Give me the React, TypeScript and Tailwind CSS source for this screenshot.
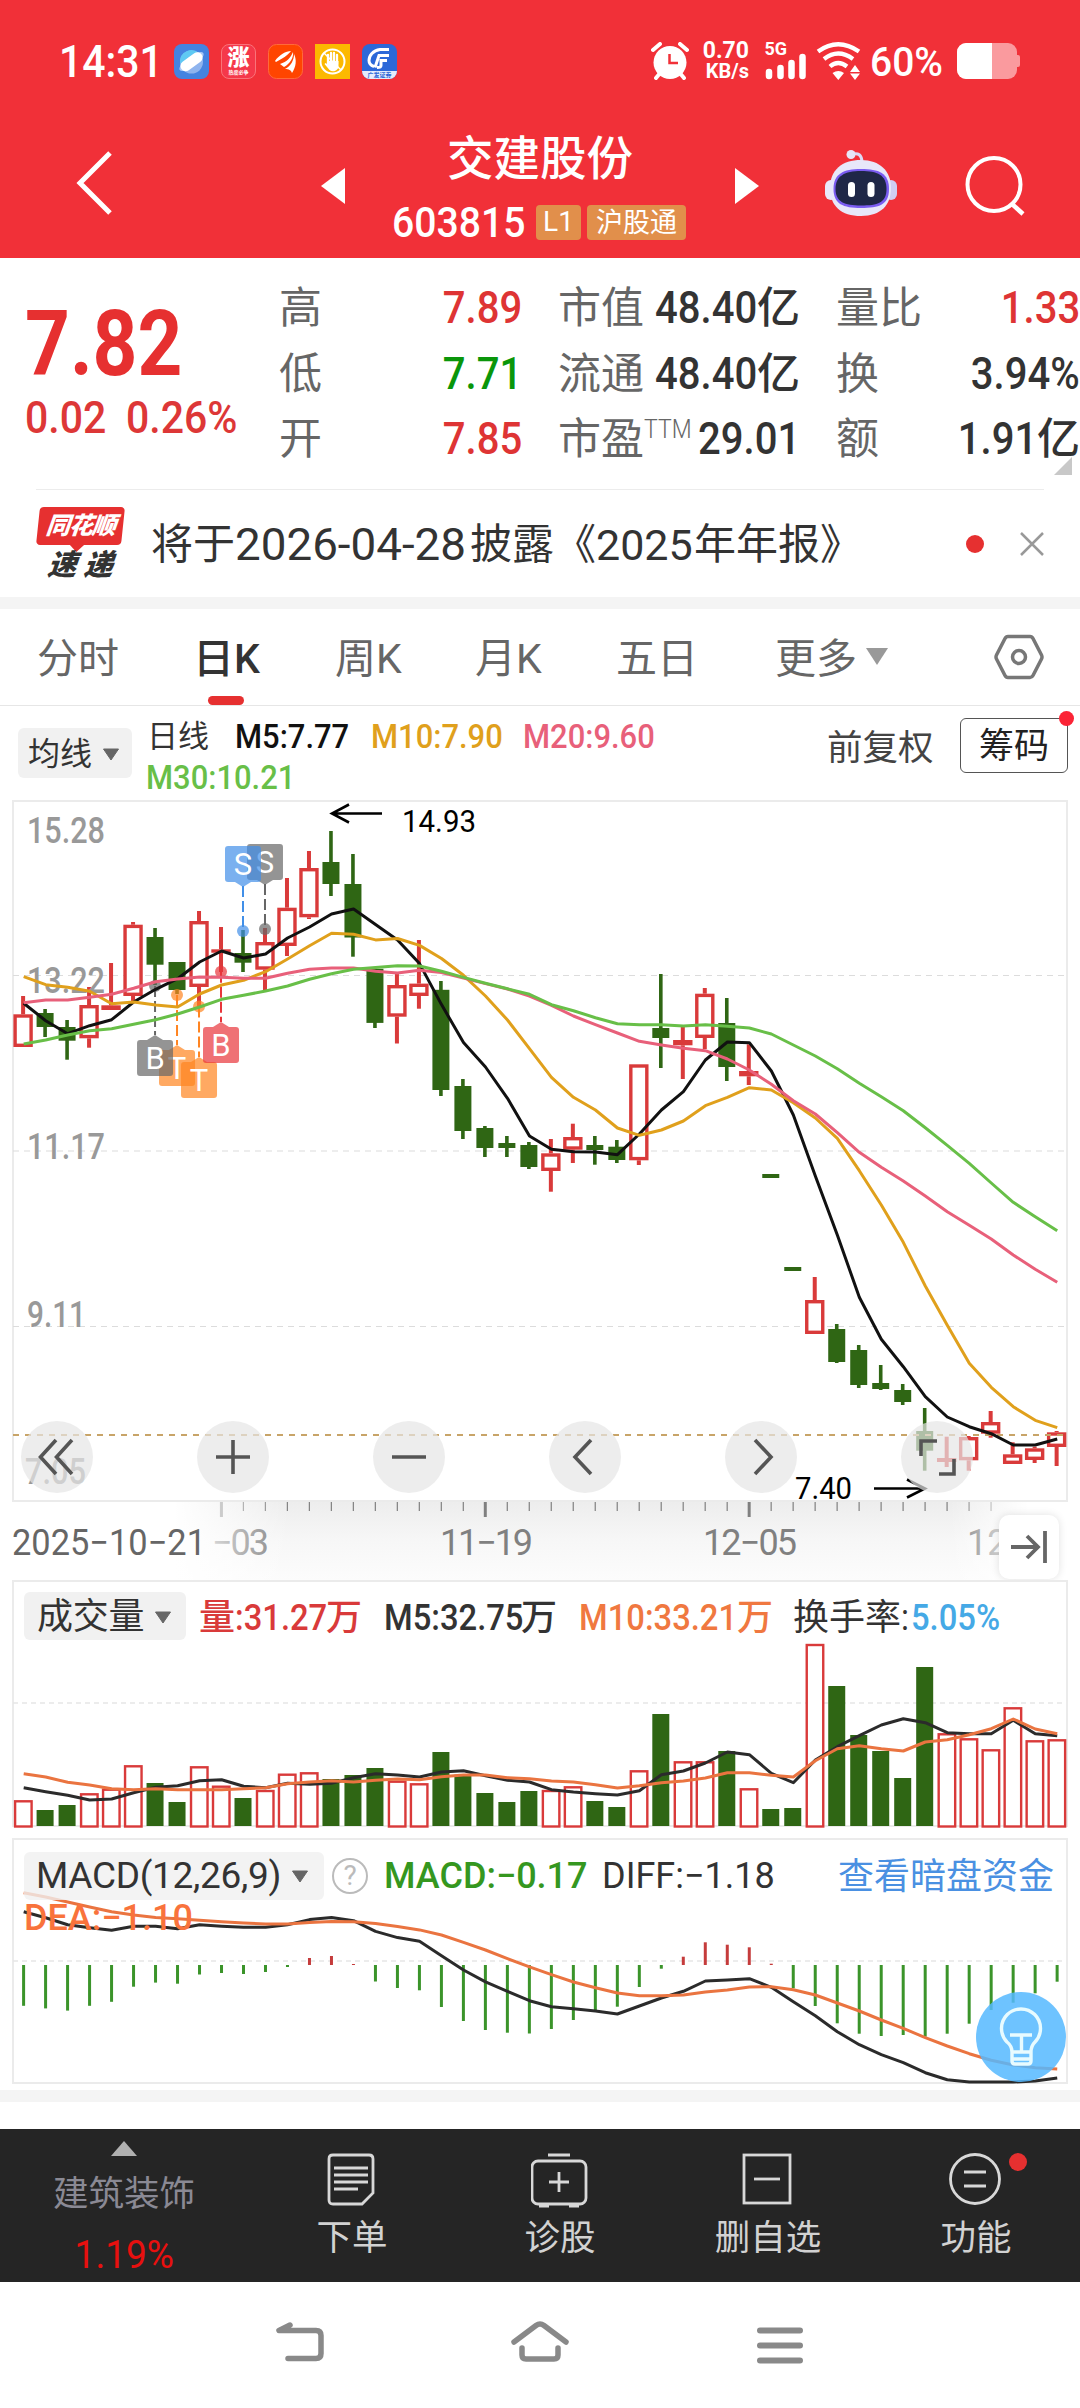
import React from 'react';
import clsx from 'clsx';

type Candle = [up: 0 | 1, high: number, top: number, bottom: number, low: number];

// Bars sit on a 22px grid, y values are plot pixels from the top of each panel
const STEP = 21.99;
const X0 = 23.1;
const cx = (i: number) => X0 + i * STEP;

const RED = '#d93a3a';
const GREEN = '#2f6614';

const candles: Candle[] = [
  [1, 196, 214.3, 247, 247],
  [0, 209, 213, 227, 237],
  [0, 220, 227, 240.7, 259.7],
  [1, 187, 205, 238.3, 247.7],
  [1, 163, 205.3, 210, 210],
  [1, 122, 124.7, 196, 201.7],
  [0, 128, 137, 164.7, 185],
  [0, 162, 162, 190, 194],
  [1, 111, 121, 187, 206],
  [1, 127, 149.3, 152.7, 172],
  [0, 130, 153, 162.7, 172],
  [1, 128, 142, 169.7, 190],
  [1, 78, 107.7, 146, 156],
  [1, 51, 68, 117.3, 119],
  [0, 31, 62, 84, 96],
  [0, 54, 84, 137.5, 156.7],
  [0, 168.8, 168.8, 222.9, 228],
  [1, 174, 185, 216.7, 243.5],
  [1, 140, 183.6, 196, 208.7],
  [0, 181, 189.8, 290, 296],
  [0, 279, 286, 331, 339],
  [0, 326, 328, 348, 357],
  [0, 336, 343, 348, 357],
  [0, 342, 345, 367, 369],
  [1, 339, 353.3, 371, 391.7],
  [1, 323.7, 337, 349.7, 363],
  [0, 336, 345, 350, 364.7],
  [0, 340, 346.7, 360, 363],
  [1, 264.3, 264.3, 360.3, 365],
  [0, 174, 228, 238, 268],
  [1, 226.7, 240, 245.3, 279],
  [1, 188, 193.7, 238, 249],
  [0, 198, 223, 267, 281],
  [1, 244.3, 271, 276.3, 285],
  [0, 374, 374, 378, 378],
  [0, 467, 467, 471, 471],
  [1, 477, 500, 534, 534],
  [0, 524, 529, 562, 563],
  [0, 545, 550, 585, 588],
  [0, 565, 583, 589, 590],
  [0, 584, 590, 602, 605],
  [0, 608, 631, 650.7, 670.7],
  [1, 636.7, 658, 662, 667],
  [1, 636, 637, 660.3, 670.7],
  [1, 611, 622, 633.7, 637.7],
  [1, 642.3, 654.3, 664, 664],
  [1, 646.7, 648.3, 660, 663],
  [1, 631, 632.3, 647, 666],
];

const ma5 = [203.3, 220.7, 233.7, 225.7, 219.7, 202, 189.3, 178.7, 162, 151, 158, 154, 138, 127, 114, 109, 124.4, 139.9, 163.6, 204.6, 242.5, 267, 298.3, 336, 349.3, 351.7, 352, 354.7, 334, 310, 291.7, 260, 242, 242.7, 271, 315, 376, 435, 497.3, 539.3, 566.7, 596.7, 617, 626.7, 633.7, 645, 645, 639];
const ma10 = [176.7, 184.7, 187.3, 191.3, 203.7, 202, 205, 207, 194, 185, 180.3, 171.7, 159, 145.7, 133.3, 134.3, 139.9, 138.5, 145.4, 158.5, 175.3, 196, 220, 248.7, 277.3, 297.3, 310, 328, 335.3, 330, 321, 305.7, 297.3, 287.7, 290, 302.7, 318, 338.3, 370.7, 405, 442.3, 486, 525.3, 563.3, 587.3, 606.7, 620.3, 627.7];
const ma20 = [202.7, 200, 200, 197.3, 194.3, 188.3, 181.7, 179, 177, 177.3, 178.3, 178.3, 173.3, 169.3, 168, 168, 171.2, 172.9, 170.2, 172.6, 178.1, 183.6, 189, 196, 205.3, 216, 224.7, 233, 241.3, 245, 248.3, 250.7, 259, 270, 284.3, 300.7, 314, 332.7, 352.3, 367.3, 381, 396, 411.7, 425.3, 439, 455, 469.3, 482.3];
const ma30 = [244, 240, 235, 230.7, 228.7, 224.3, 219.7, 214, 207, 199.3, 195.3, 191, 186, 179.3, 173.7, 169.3, 167.4, 165.7, 166, 171.2, 177.4, 183.3, 188.8, 194.3, 204.7, 210.7, 217.7, 223.7, 224.7, 224.7, 226, 224.7, 226.3, 228, 234, 245, 256, 268.7, 283.3, 296.7, 310.7, 327.7, 345.3, 363.3, 383, 402.3, 416.7, 430.7];

const volTop = [220.3, 230, 225, 213.3, 208.7, 185.3, 203, 222, 186.3, 205.7, 218, 210, 193.7, 192.3, 199, 195, 188, 200.7, 203.3, 172, 194.7, 213, 222, 211, 210, 206.3, 221, 227, 190.3, 134, 181.3, 181.3, 171, 208.3, 229, 228, 64, 106, 155, 171, 198, 87, 153.3, 158.3, 169.3, 127.3, 160.3, 159.3];
const volMa5 = [207.7, 211.7, 215.3, 220, 219, 212.7, 207.3, 205.7, 200.7, 199.7, 206.3, 207.7, 203.3, 204.3, 203.3, 197.7, 193.7, 195, 197, 192, 190.7, 195.7, 200.3, 202, 209.7, 212, 213.7, 215, 210.7, 194.7, 191, 183, 172, 174.7, 193.3, 202.7, 180, 166.7, 155.7, 145, 138.7, 142.7, 152.7, 153.7, 153.7, 140.3, 153.7, 155.7];
const volMa10 = [193.7, 197, 202.3, 205, 208.7, 209.7, 208.7, 209.7, 209.7, 209.7, 208.7, 207.7, 203.7, 202, 200.7, 202, 200.3, 199, 199.7, 196.7, 195, 195, 197.7, 198.7, 201, 202, 204.7, 208, 205.7, 202.7, 201, 198, 192.7, 192.7, 195.3, 197, 180.7, 168.7, 165.7, 168.7, 171, 162, 159.7, 154.7, 148.7, 139, 149, 153.7];

const macdEnd = [165.8, 168.4, 170.6, 165.8, 161.8, 146.7, 142.6, 143.7, 134.5, 133, 134, 132, 127, 118, 116, 124, 141.5, 148, 150.3, 167, 181, 190, 192.7, 193.5, 189, 180, 172, 166.7, 147, 128.7, 116.7, 102.3, 104.7, 107.3, 123.7, 148.3, 166, 183.3, 193.7, 196, 195, 196.7, 193.7, 183.7, 170, 162.7, 153.3, 141.7];
const diff = [71.8, 77.7, 84.7, 87.7, 90.3, 86.2, 86.2, 88.8, 84.7, 86.2, 87.3, 87.3, 84.7, 79.6, 77.4, 80.7, 91.4, 97.6, 101.3, 115.7, 130, 141.9, 151.4, 160.7, 166.7, 168.7, 171, 174, 166, 158, 151.3, 141, 140, 138.7, 147.3, 161.7, 175.7, 191.7, 204.7, 214.7, 222.7, 232.7, 239.7, 242, 242, 242, 241, 238];
const dea = [52.7, 57, 62, 67, 71.8, 75.1, 77.4, 78.8, 80.3, 81.8, 82.9, 84, 84, 82.5, 81.4, 81.8, 83.6, 86.6, 89.9, 95, 102.4, 110, 118.6, 126.8, 134.7, 142, 147.7, 153, 155.7, 155.7, 155, 152, 150, 147, 146.7, 149.7, 155, 163, 171, 180, 188.3, 197.7, 206, 213.7, 220.3, 225, 227.7, 229];

const Line = ({ data, color }: { data: number[]; color: string }) => (
  <polyline
    points={data.map((y, i) => `${cx(i) + 0.6},${y}`).join(' ')}
    fill="none"
    stroke={color}
    strokeWidth="3"
    strokeLinejoin="round"
  />
);

// Slightly condensed numerals; the width is set by the caller
const Num = ({ children, className, right }: { children: React.ReactNode; className?: string; right?: boolean }) => (
  <span className={clsx('flex shrink-0', right && 'justify-end', className)}>
    <span className={clsx('shrink-0 whitespace-nowrap scale-x-[0.91]', right ? 'origin-right' : 'origin-left')}>
      {children}
    </span>
  </span>
);

const Caret = ({ className }: { className?: string }) => (
  <svg viewBox="0 0 18 13" className={clsx('shrink-0', className)}>
    <path d="M1.5 1h15L9 12z" fill="#666" stroke="#666" strokeLinejoin="round" />
  </svg>
);

const StatusBar = () => (
  <div className="h-[122px] flex items-center pl-[59px] pr-[60px] text-white">
    <span className="mt-px w-[115px] text-[44px] font-medium leading-none">
      <span className="inline-block origin-left scale-x-[0.93]">14:31</span>
    </span>
    <div className="flex gap-[12px]">
      <svg viewBox="0 0 35 35" className="size-[35px]">
        <rect width="35" height="35" rx="8" fill="#4583e0" />
        <circle cx="17.500" cy="18" r="11.500" fill="#8fb4ee" />
        <path d="M6 18a11.500 11.500 0 0 1 19-9L8 22z" fill="#5fc9f3" />
        <ellipse cx="17.500" cy="17.500" rx="14.500" ry="5" fill="#a9c8f5" transform="rotate(-36 17.500 17.500)" />
        <rect x="5" y="12.500" width="25" height="10.500" rx="5.250" fill="#fff" transform="rotate(-36 17.500 17.700)" />
      </svg>
      <div className="size-[35px] rounded-[8px] border border-[#f9737a] bg-[#f5384a] flex flex-col items-center justify-center">
        <span className="text-[22px] leading-[22px] font-black">涨</span>
        <span className="text-[5px] leading-[6px] font-bold">热度必争</span>
      </div>
      <svg viewBox="0 0 35 35" className="size-[35px]">
        <rect x="0.500" y="0.500" width="34" height="34" rx="8" fill="#ff4500" stroke="#ff6a3a" />
        <path d="M7 17c4-6 11-10 16-10-3 4-9 8-15 11zM12 20c7-2 11-7 13-12 1 5-3 12-9 15zM17 25c6-3 9-9 9-15 3 6 2 13-2 19-1-3-3-4-7-4z" fill="#fff" />
      </svg>
      <svg viewBox="0 0 35 35" className="size-[35px]">
        <rect width="35" height="35" fill="#fcb900" />
        <circle cx="17.500" cy="17.500" r="12" fill="none" stroke="#fff" strokeWidth="2" />
        <path d="M13 11v9M16 9v10M19 9v10M22 11v9" stroke="#fff" strokeWidth="2.300" strokeLinecap="round" />
        <path d="M12 17h11.500v5a5.500 5 0 0 1-9 4l-5-6 1-1 3 2z" fill="#fff" />
        <path d="M9 9l17 17" stroke="#fff" strokeWidth="1.500" />
      </svg>
      <div className="size-[35px] rounded-[8px] overflow-hidden bg-[#2c68d8] flex flex-col">
        <svg viewBox="0 0 35 26" className="h-[27px] w-[35px]">
          <path d="M27 5h-9c-7 1-11 6-11 11 0 3 2 5 5 6M27 11H17l-4 12M25 16h-6v5q0 2-4 2" fill="none" stroke="#fff" strokeWidth="3" />
        </svg>
        <span className="h-[8px] bg-[#e4ecfb] text-center text-[6px] leading-[8px] font-bold text-[#2c68d8]">广发证券</span>
      </div>
    </div>

    <div className="ml-auto flex items-center">
      <svg viewBox="0 0 38 38" className="w-[38px] h-[38px]">
        <circle cx="19" cy="20.500" r="16.500" fill="#fff" />
        <path d="M2 8l7-6M36 8l-7-6M5 36l5-6M33 36l-5-6" stroke="#fff" strokeWidth="4" strokeLinecap="round" />
        <path d="M18.500 12v9h8.500" stroke="#f13038" strokeWidth="2.500" fill="none" />
      </svg>
      <div className="ml-[12px] w-[48px] text-[23px] font-bold leading-[20px] text-right">
        <div>0.70</div>
        <div className="text-[20px]">KB/s</div>
      </div>
      <svg viewBox="0 -4 44 42" className="ml-[15px] mb-[4px] w-[44px] h-[42px]">
        <text x="0.500" y="13" fill="#fff" fontSize="18" fontWeight="700">5G</text>
        <path d="M5 30v4M16.500 26v8M27.500 21v13M38.500 15v19" stroke="#fff" strokeWidth="6.500" strokeLinecap="round" />
      </svg>
      <svg viewBox="0 0 46 38" className="ml-[8px] w-[46px] h-[38px]">
        <path d="M2 9.500Q22 -5 43 9.500M8 17Q22 6 37 17M14 24.500Q22 17.500 31 24.500" fill="none" stroke="#fff" strokeWidth="4.300" />
        <path d="M16.500 31q6-4 11.500 0l-5.700 7zM34 30l5-7 5 7zM34 31.500h10l-5 6.500z" fill="#fff" />
      </svg>
      <span className="ml-[8px] mt-[2px] w-[87px] text-[41px] font-medium leading-none">
        <span className="inline-block origin-left scale-x-[0.95]">60%</span>
      </span>
      <div className="flex items-center">
        <div className="flex h-[36px] w-[60px] overflow-hidden rounded-[9px] bg-[#fa9a9e]">
          <div className="w-[35px] bg-white" />
        </div>
        <div className="h-[12px] w-[3px] rounded-r-[2px] bg-[#fa9a9e]" />
      </div>
    </div>
  </div>
);

const Robot = () => (
  <svg viewBox="0 0 72 67" className="w-[72px] h-[67px]">
    <path d="M28 4q8-2 9 7" fill="none" stroke="#dcdaf5" strokeWidth="3" />
    <circle cx="26" cy="4.500" r="4.500" fill="#e7e6f8" />
    <rect y="30" width="12" height="20" rx="6" fill="#e9e8fa" />
    <rect x="60" y="30" width="12" height="20" rx="6" fill="#d0cdf3" />
    <path d="M36 10C55 10 66 21 66 38S56 66 36 66 5 56 5 38 17 10 36 10z" fill="#e8e7f9" />
    <path d="M36 19c18 0 28 4 28 20s-10 19-28 19S8.500 54 8.500 39 18 19 36 19z" fill="#7a5cf0" />
    <path d="M36 21c16.500 0 25.500 4 25.500 18S52.500 55.500 36 55.500 10.500 52 10.500 39 19.500 21 36 21z" fill="#1f2747" />
    <rect x="23" y="32" width="7" height="15" rx="3.500" fill="#fff" />
    <rect x="42.500" y="32" width="7" height="15" rx="3.500" fill="#fff" />
  </svg>
);

const TitleBar = () => (
  <div className="h-[136px] flex text-white">
    <svg viewBox="0 0 36 66" className="ml-[76px] mt-[28px] w-[36px] h-[66px]">
      <path d="M34 3L4 33l30 30" fill="none" stroke="#fff" strokeWidth="5" />
    </svg>
    <svg viewBox="0 0 24 36" className="ml-[209px] mt-[46px] w-[24px] h-[36px]">
      <path d="M24 0v36L0 18z" fill="#fff" />
    </svg>
    <div className="w-[390px] flex flex-col items-center">
      <div className="mt-[13px] text-[46.500px] leading-[48px] font-medium">交建股份</div>
      <div className="mt-[16px] -ml-[2px] flex items-center h-[46px] leading-none">
        <Num className="w-[144px] text-[43px] font-medium">603815</Num>
        <span className="w-[45px] h-[35px] rounded-[4px] bg-[#e18f4b] text-[28px] leading-[34px] text-center">L1</span>
        <span className="ml-[6px] w-[99px] h-[35px] rounded-[4px] bg-[#e18f4b] text-[27px] leading-[36px] text-center">沪股通</span>
      </div>
    </div>
    <svg viewBox="0 0 24 36" className="mt-[46px] w-[24px] h-[36px]">
      <path d="M0 0v36l24-18z" fill="#fff" />
    </svg>
    <div className="ml-[66px] mt-[28px]"><Robot /></div>
    <svg viewBox="0 0 60 61" className="ml-[68px] mt-[33px] w-[60px] h-[61px]">
      <circle cx="29" cy="29.500" r="26.500" fill="none" stroke="#fff" strokeWidth="4" />
      <path d="M47 49l11 10" stroke="#fff" strokeWidth="4.500" />
    </svg>
  </div>
);

const quoteRows = [
  { a: '高', av: '7.89', ac: 'text-[#de3434]', b: '市值', bv: '48.40', unit: '亿', c: '量比', cv: '1.33', cc: 'text-[#de3434]', cu: '' },
  { a: '低', av: '7.71', ac: 'text-[#0a960a]', b: '流通', bv: '48.40', unit: '亿', c: '换', cv: '3.94%', cc: '', cu: '' },
  { a: '开', av: '7.85', ac: 'text-[#de3434]', b: '市盈', bv: '29.01', unit: '', c: '额', cv: '1.91', cc: '', cu: '亿' },
];

const Quote = () => (
  <div className="relative h-[231px] flex">
    <div className="w-[279px] pl-[25px] pt-[41px] text-[#e63030] font-medium">
      <div className="text-[91px] leading-[90px] font-bold">
        <span className="inline-block origin-left scale-x-[0.86]">7.82</span>
      </div>
      <div className="mt-[5px] flex text-[45px] leading-[48px] text-[#dd3737]">
        <Num className="w-[101px]">0.02</Num>
        <Num>0.26%</Num>
      </div>
    </div>
    <div className="flex-1 pt-[18px] text-[43px] leading-[65.500px]">
      {quoteRows.map((r) => (
        <div key={r.a} className="flex h-[65.500px] text-[#333]">
          <span className="w-[100px] text-[#666]">{r.a}</span>
          <Num right className={clsx('w-[143px] text-[44px] font-medium', r.ac)}>{r.av}</Num>
          <span className="ml-[36px] flex w-[242px] justify-between font-medium">
            <span className="flex text-[#666] font-normal">
              {r.b}
              {!r.unit && (
                <span className="w-[44px] -mt-[10px] text-[25px] font-light">
                  <span className="inline-block origin-left scale-x-[0.92]">TTM</span>
                </span>
              )}
            </span>
            <span className="flex">
              <Num right className="text-[44px] w-[90px]">{r.bv}</Num>
              {r.unit && <span>{r.unit}</span>}
            </span>
          </span>
          <span className="ml-[36px] w-[90px] whitespace-nowrap text-[#666]">{r.c}</span>
          <span className="flex-1 flex justify-end font-medium">
            <Num right className={clsx('text-[44px] w-[90px]', r.cc)}>{r.cv}</Num>
            {r.cu && <span>{r.cu}</span>}
          </span>
        </div>
      ))}
    </div>
    <svg viewBox="0 0 18 18" className="absolute right-[8px] bottom-[14px] size-[18px]">
      <path d="M18 0v18H0z" fill="#c8c8c8" />
    </svg>
  </div>
);

const News = () => (
  <div className="mx-[36px] h-[108px] border-t border-[#ececec] flex items-center text-[#333]">
    <div className="w-[89px] h-[74px] italic text-center">
      <div className="relative mx-[2px] h-[38px] -skew-x-6 rounded-[4px] bg-[#e63030] text-[24px] leading-[38px] font-black tracking-[-1px] text-white">
        同花顺
        <span className="absolute left-[36px] -bottom-[5px] size-[10px] rotate-45 bg-[#e63030]" />
      </div>
      <div className="mt-[4px] -skew-x-6 text-[29px] leading-[32px] font-black">速 递</div>
    </div>
    <span className="ml-[26px] mt-[3px] flex text-[42px] leading-[60px] whitespace-nowrap">
      将于
      <span className="w-[235px] text-[44px]">
        <span className="inline-block origin-left scale-x-[1.04]">2026-04-28</span>
      </span>
      披露《
      <span className="w-[98px] text-[43px]">2025</span>
      年年报》
    </span>
    <span className="ml-auto size-[18px] rounded-full bg-[#e63030]" />
    <svg viewBox="0 0 24 24" className="ml-[36px] size-[24px]">
      <path d="M1 1l22 22M23 1L1 23" stroke="#999" strokeWidth="2.500" />
    </svg>
  </div>
);

const periods = [
  { label: '分时', box: 'w-[156px]' },
  { label: '日K', box: 'w-[142px]' },
  { label: '周K', box: 'w-[140px]' },
  { label: '月K', box: 'w-[141px]' },
  { label: '五日', box: 'w-[159px]' },
  { label: '更多', box: 'w-[147px]' },
];

const Periods = () => (
  <div className="h-[97px] pt-[15px] pl-[37px] flex border-b border-[#e6e6e6] text-[41px] leading-[70px] text-[#666]">
    {periods.map((p) => (
      <div key={p.label} className={clsx(p.box, 'flex shrink-0')}>
        <div className={clsx('flex flex-col items-center', p.label === '日K' && 'font-medium text-[#333]')}>
          {p.label}
          {p.label === '日K' && <span className="mt-[2px] h-[9px] w-[36px] shrink-0 rounded-full bg-[#e63030]" />}
        </div>
        {p.label === '更多' && (
          <svg viewBox="0 0 24 19" className="ml-[8px] mt-[23px] w-[24px] h-[19px]">
            <path d="M1 1h22L12 18z" fill="#999" />
          </svg>
        )}
      </div>
    ))}
    <svg viewBox="0 0 50 46" className="ml-[72px] mt-[10px] w-[50px] h-[46px]">
      <path d="M14 2.500h22q2 0 3 2L47.500 21q1 2 0 4L39 41.500q-1 2-3 2H14q-2 0-3-2L2.500 25q-1-2 0-4L11 4.500q1-2 3-2z" fill="none" stroke="#777" strokeWidth="3.500" />
      <circle cx="25" cy="23" r="6.500" fill="none" stroke="#777" strokeWidth="3.500" />
    </svg>
  </div>
);

const MaHeader = () => (
  <div className="h-[94px] flex">
    <button className="ml-[18px] mt-[22px] flex h-[50px] w-[114px] items-center rounded-[6px] bg-[#f1f1f1] pl-[10px] pt-[2px] text-[32px] text-[#333]">
      均线
      <Caret className="ml-[10px] w-[18px]" />
    </button>
    <div className="ml-[14px] mt-[10px] w-[600px] text-[34px] leading-[41px] font-medium">
      <div className="flex">
        <span className="w-[89px] pl-px text-[31px] font-normal text-[#333]">日线</span>
        <Num className="w-[136px] text-[#111]">M5:7.77</Num>
        <Num className="w-[152px] text-[#e0a01c]">M10:7.90</Num>
        <Num className="text-[#e8607a]">M20:9.60</Num>
      </div>
      <Num className="text-[#68bf48]">M30:10.21</Num>
    </div>
    <span className="ml-[81px] mt-[14px] text-[35.500px] leading-[56px] text-[#444]">前复权</span>
    <div className="relative ml-auto mr-[12px] mt-[12px] h-[55px] w-[108px] rounded-[6px] border border-[#555] text-center text-[35px] leading-[55px] text-[#222]">
      筹码
      <span className="absolute -right-[7px] -top-[8px] size-[15px] rounded-full bg-[#fb2436]" />
    </div>
  </div>
);

const priceLabels = [
  { y: 43, text: '15.28', w: 78 },
  { y: 193, text: '13.22', w: 78 },
  { y: 359, text: '11.17', w: 78 },
  { y: 527, text: '9.11', w: 59 },
];

// Trade markers: buy / sell / T pinned to a day
const markers = [
  { i: 7, dot: 195, box: 250, text: 'T', color: '#ff8420', up: true },
  { i: 6, dot: 186, box: 240, text: 'B', color: '#666', up: true },
  { i: 8, dot: 206.500, box: 262, text: 'T', color: '#ff8420', up: true },
  { i: 9, dot: 171.700, box: 227, text: 'B', color: '#e8353a', up: true },
  { i: 11, dot: 129, box: 44, text: 'S', color: '#666', up: false },
  { i: 10, dot: 131, box: 46, text: 'S', color: '#418fe8', up: false },
];

const PriceChart = () => (
  <svg viewBox="0 0 1080 702" className="block w-[1080px] h-[702px] overflow-visible">
    <rect x="13" y="1" width="1054" height="700" fill="none" stroke="#ebebeb" strokeWidth="2" />
    {[175.500, 351, 526.500].map((y) => (
      <path key={y} d={`M13 ${y}H1066`} stroke="#dcdcdc" strokeWidth="1.200" strokeDasharray="6 5" />
    ))}
    {candles.map(([up, high, top, bottom, low], i) => {
      const x = cx(i);
      if (!up) {
        return (
          <g key={i} fill={GREEN}>
            <rect x={x - 1.800} y={high} width="3.600" height={low - high} />
            <rect x={x - 8.500} y={top} width="17" height={bottom - top} />
          </g>
        );
      }
      const flat = bottom - top < 7;
      return (
        <g key={i} fill={RED}>
          <rect x={x - 2} y={high} width="4" height={top - high} />
          <rect x={x - 2} y={bottom} width="4" height={low - bottom} />
          {flat ? (
            <rect x={x - 9.700} y={top} width="19.400" height={bottom - top} />
          ) : (
            <rect x={x - 8} y={top + 1.700} width="16" height={bottom - top - 3.400} fill="#fff" stroke={RED} strokeWidth="3.400" />
          )}
        </g>
      );
    })}
    <g fill="#999" fontSize="36" fontWeight="500">
      {priceLabels.map((l) => (
        <text key={l.text} x="27" y={l.y} textLength={l.w} lengthAdjust="spacingAndGlyphs">{l.text}</text>
      ))}
      <text x="25" y="684" textLength="61" lengthAdjust="spacingAndGlyphs">7.05</text>
    </g>
    <path d="M13 635H1066" stroke="#c8a468" strokeWidth="2" strokeDasharray="6 6" />
    {markers.map((m) => {
      const x = cx(m.i);
      return (
        <g key={m.i}>
          <path
            d={m.up ? `M${x} ${m.dot}V${m.box - 5}` : `M${x} ${m.box + 40}V${m.dot}`}
            stroke={m.color}
            strokeWidth="2"
            strokeDasharray="11 4"
          />
          <circle cx={x} cy={m.dot} r="6" fill={m.color} fillOpacity="0.7" />
          <g fill={m.color} fillOpacity="0.7">
            <rect x={x - 18} y={m.box} width="36" height="36" rx="3" />
            <path d={m.up ? `M${x - 8} ${m.box}l8-5 8 5z` : `M${x - 8} ${m.box + 36}l8 5 8-5z`} />
          </g>
          <text x={x} y={m.box + 29} textAnchor="middle" fill="#fff" fontSize="31">{m.text}</text>
        </g>
      );
    })}
    <Line data={ma5} color="#111" />
    <Line data={ma10} color="#e0a01c" />
    <Line data={ma20} color="#e8607a" />
    <Line data={ma30} color="#68bf48" />
    <path d="M382 13.500H332M349 4.500L332 13.500l17 9" fill="none" stroke="#000" strokeWidth="2.600" />
    <text x="402" y="32" fontSize="31" textLength="74" lengthAdjust="spacingAndGlyphs">14.93</text>
    <path d="M874 688.500h50M907 679.500l18 9-18 9" fill="none" stroke="#000" strokeWidth="2.600" />
    <text x="795" y="699" fontSize="31" textLength="57" lengthAdjust="spacingAndGlyphs">7.40</text>
  </svg>
);

const controls = [
  'M35 19L19.500 36 35 53M51 19L35.500 36 51 53',
  'M19 36h34M36 19v34',
  'M19 36h34',
  'M42 19L26 36l16 17',
  'M30 19l16 17-16 17',
  'M20 35V20h16M38 53h15V38',
];

const Controls = () => (
  <div className="absolute left-[21px] top-[621px] flex gap-[104px]">
    {controls.map((d) => (
      <button key={d} className="size-[72px] rounded-full bg-[#e6e6e6]/70">
        <svg viewBox="0 0 72 72" className="size-[72px]">
          <path d={d} fill="none" stroke="#555" strokeWidth="3.600" />
        </svg>
      </button>
    ))}
  </div>
);

const DateAxis = () => (
  <div className="relative h-[78px]">
    <div className="absolute inset-0 bg-gradient-to-b from-[#ededed] via-[#f7f7f7] to-[#fcfcfc]" />
    <svg viewBox="0 0 1080 78" className="absolute inset-0 w-[1080px] h-[78px]">
      {Array.from({ length: 36 }, (_, k) => k + 9).map((i) => {
        const major = (i - 9) % 12 === 0;
        return (
          <path key={i} d={`M${cx(i) + 0.400} 0v${major ? 15 : 9}`} stroke="#808080" strokeWidth={major ? 3 : 1.200} />
        );
      })}
      <g fill="#808080" fontSize="36">
        <text x="212" y="53" textLength="57">−03</text>
        <text x="440" y="53" textLength="93">11−19</text>
        <text x="703" y="53" textLength="94">12−05</text>
        <text x="967" y="53">12</text>
      </g>
    </svg>
    <div className="absolute inset-y-0 left-0 w-[290px] bg-gradient-to-r from-white from-60% to-transparent" />
    <div className="absolute inset-y-0 right-0 w-[130px] bg-gradient-to-l from-white from-40% to-transparent" />
    <svg viewBox="0 0 212 78" className="absolute left-0 top-0 w-[212px] h-[78px]">
      <text x="12" y="53" fill="#666" fontSize="36" textLength="194" lengthAdjust="spacingAndGlyphs">2025−10−21</text>
    </svg>
    <button className="absolute left-[999px] top-[13px] h-[64px] w-[60px] rounded-[10px] bg-white shadow-[0_0_8px_rgba(0,0,0,0.12)]">
      <svg viewBox="0 0 60 64" className="w-[60px] h-[64px]">
        <path d="M12 32h26M28 21l11 11-11 11M46 16v32" fill="none" stroke="#666" strokeWidth="3.800" />
      </svg>
    </button>
  </div>
);

const VolumePanel = () => (
  <div className="relative h-[258px]">
    <svg viewBox="0 0 1080 258" className="absolute inset-0 w-[1080px] h-[258px]">
      <path d="M13 246V1H1067V246z" fill="#fff" stroke="#ebebeb" strokeWidth="2" />
      <path d="M13 123H1066" stroke="#e6e6e6" strokeWidth="1.500" strokeDasharray="5 4" />
      {volTop.map((y, i) =>
        candles[i][0] ? (
          <rect key={i} x={cx(i) - 8} y={y + 1} width="16.500" height={245.500 - y} fill="#fff" stroke={RED} strokeWidth="2.400" />
        ) : (
          <rect key={i} x={cx(i) - 8.500} y={y} width="17" height={246 - y} fill={GREEN} />
        )
      )}
      <Line data={volMa5} color="#2b2b2b" />
      <Line data={volMa10} color="#ea7440" />
    </svg>
    <div className="relative pt-[12px] pl-[24px] flex text-[36px] leading-[52px] text-[#333] font-medium">
      <button className="flex h-[48px] w-[162px] items-center rounded-[6px] bg-[#f1f1f1] pl-[13px] pt-[2px] font-normal tracking-[-0.300px]">
        成交量
        <Caret className="ml-[10px] w-[18px]" />
      </button>
      <span className="ml-[13px] flex w-[185px] text-[#d93a3a]">
        量<Num className="w-[91px]">:31.27</Num>万
      </span>
      <span className="flex w-[195px]">
        <Num className="w-[137px]">M5:32.75</Num>万
      </span>
      <span className="flex w-[214px] text-[#f07840]">
        <Num className="w-[158px]">M10:33.21</Num>万
      </span>
      <span className="flex font-normal">
        换手率<Num className="w-[10px]">:</Num>
        <Num className="font-medium text-[#45a9e6]">5.05%</Num>
      </span>
    </div>
  </div>
);

const MacdPanel = () => (
  <div className="relative h-[252px]">
    <svg viewBox="0 -2 1080 252" className="absolute inset-0 w-[1080px] h-[252px]">
      <rect x="13" y="-1" width="1054" height="244" fill="none" stroke="#ebebeb" strokeWidth="2" />
      <path d="M13 121H1066" stroke="#e6e6e6" strokeWidth="1.500" strokeDasharray="5 4" />
      {macdEnd.map((y, i) => (
        <rect
          key={i}
          x={cx(i) - 1}
          y={Math.min(y, 125)}
          width="3"
          height={Math.abs(y - 125)}
          fill={y < 125 ? '#c53c3c' : '#3b942a'}
        />
      ))}
      <Line data={diff} color="#2b2b2b" />
      <Line data={dea} color="#ea7440" />
    </svg>
    <div className="relative pt-[12px] pl-[24px] pr-[26px] flex items-center text-[36px] leading-[48px] text-[#333]">
      <button className="flex h-[48px] w-[300px] items-center rounded-[6px] bg-[#f0f0f0]/80 pl-[12px] pt-px text-[37px]">
        <span className="w-[244px] text-left tracking-[-0.300px]">MACD(12,26,9)</span>
        <Caret className="ml-[11px] w-[18px]" />
      </button>
      <span className="ml-[8px] size-[36px] rounded-full border-2 border-[#bbb] text-center text-[28px] leading-[32px] text-[#bbb]">?</span>
      <span className="ml-[16px] w-[218px] whitespace-nowrap font-medium text-[#35971f]">MACD:−0.17</span>
      <span className="whitespace-nowrap">DIFF:−1.18</span>
      <span className="ml-auto mt-[3px] text-[#4a90e2]">查看暗盘资金</span>
    </div>
    <div className="relative pl-[24px] text-[36px] leading-[34px] font-medium text-[#f9733c]">DEA:−1.10</div>
    <div className="absolute left-[976px] top-[154px] size-[90px] rounded-full bg-[#55b8ff]/85">
      <svg viewBox="0 0 90 90" className="size-[90px]">
        <path d="M36 60q0-6-5-10a19.500 19.500 0 1 1 28 0q-4 4-4 10zM36 60v9q0 3 3 3h13q3 0 3-3v-9M36 67h19M34 43h22M45.500 43v17" fill="none" stroke="#e8fbff" strokeWidth="3.400" />
      </svg>
    </div>
  </div>
);

const tools = [
  {
    label: '下单',
    icon: (
      <>
        <path d="M9 4h36q4 0 4 4v34L38 53H9q-4 0-4-4V8q0-4 4-4z" />
        <path d="M10 17h34M10 24h34M10 31h34M10 38h24" />
      </>
    ),
  },
  {
    label: '诊股',
    icon: (
      <>
        <rect x="0" y="10" width="54" height="43" rx="6" />
        <path d="M16 4h22M27 21v20M17 31h20M7 55h10M37 55h10" />
      </>
    ),
  },
  {
    label: '删自选',
    icon: (
      <>
        <rect x="4" y="4" width="46" height="48" />
        <path d="M14 28h26" />
      </>
    ),
  },
  {
    label: '功能',
    icon: (
      <>
        <circle cx="27" cy="28" r="24.500" />
        <path d="M16 21h22M16 35h22" />
      </>
    ),
    dot: true,
  },
];

const BottomBar = () => (
  <div className="h-[153px] bg-[#252525] flex text-[35.500px] text-[#d2d2d2]">
    <div className="w-[248px] flex flex-col items-center pt-[12px]">
      <svg viewBox="0 0 26 15" className="w-[26px] h-[15px]">
        <path d="M13 0l13 15H0z" fill="#b0b0b0" />
      </svg>
      <span className="mt-[13px] leading-[50px] text-[#8a8994]">建筑装饰</span>
      <span className="mt-[11px] leading-[50px] text-[39px] text-[#e8100f]">
        <span className="inline-block scale-x-[0.95]">1.19%</span>
      </span>
    </div>
    {tools.map((t) => (
      <div key={t.label} className="relative w-[208px] flex flex-col items-center pt-[22px]">
        <svg viewBox="-1 0 58 58" className="w-[58px] h-[58px]" fill="none" stroke="#d8d8d8" strokeWidth="2.800">
          {t.icon}
        </svg>
        <span className="leading-[59px]">{t.label}</span>
        {t.dot && <span className="absolute left-[137px] top-[24px] size-[18px] rounded-full bg-[#e63030]" />}
      </div>
    ))}
  </div>
);

const SystemNav = () => (
  <div className="h-[126px] flex justify-center pt-[38px] pb-[40px]">
    <div className="flex gap-[182px]">
      <svg viewBox="0 0 58 48" className="w-[58px] h-[48px]" fill="none" stroke="#898989" strokeWidth="5.500" strokeLinecap="round" strokeLinejoin="round">
        <path d="M19 5L8 10.500h37q5 0 5 5v18q0 5-5 5H17" />
      </svg>
      <svg viewBox="0 0 58 48" className="w-[58px] h-[48px]" fill="none" stroke="#898989" strokeWidth="5.500" strokeLinecap="round" strokeLinejoin="round">
        <path d="M3 22L25 5.500q4-3 8 0L55 22M11 28v7q0 4 4 4h28q4 0 4-4v-7" />
      </svg>
      <svg viewBox="0 0 58 48" className="w-[58px] h-[48px]" fill="none" stroke="#898989" strokeWidth="6" strokeLinecap="round">
        <path d="M9 10.500h40M9 25.500h40M9 40.500h40" />
      </svg>
    </div>
  </div>
);

export default function App() {
  return (
    <div className="w-[1080px] h-[2408px] overflow-hidden bg-white font-[Roboto,'Noto_Sans_CJK_SC',sans-serif]">
      <header className="h-[258px] bg-[#f13038]">
        <StatusBar />
        <TitleBar />
      </header>
      <Quote />
      <News />
      <div className="h-[12px] bg-[#f4f4f4]" />
      <Periods />
      <MaHeader />
      <div className="relative">
        <PriceChart />
        <Controls />
      </div>
      <DateAxis />
      <VolumePanel />
      <MacdPanel />
      <div className="mb-[27px] h-[12px] bg-[#f4f4f4]" />
      <BottomBar />
      <SystemNav />
    </div>
  );
}
